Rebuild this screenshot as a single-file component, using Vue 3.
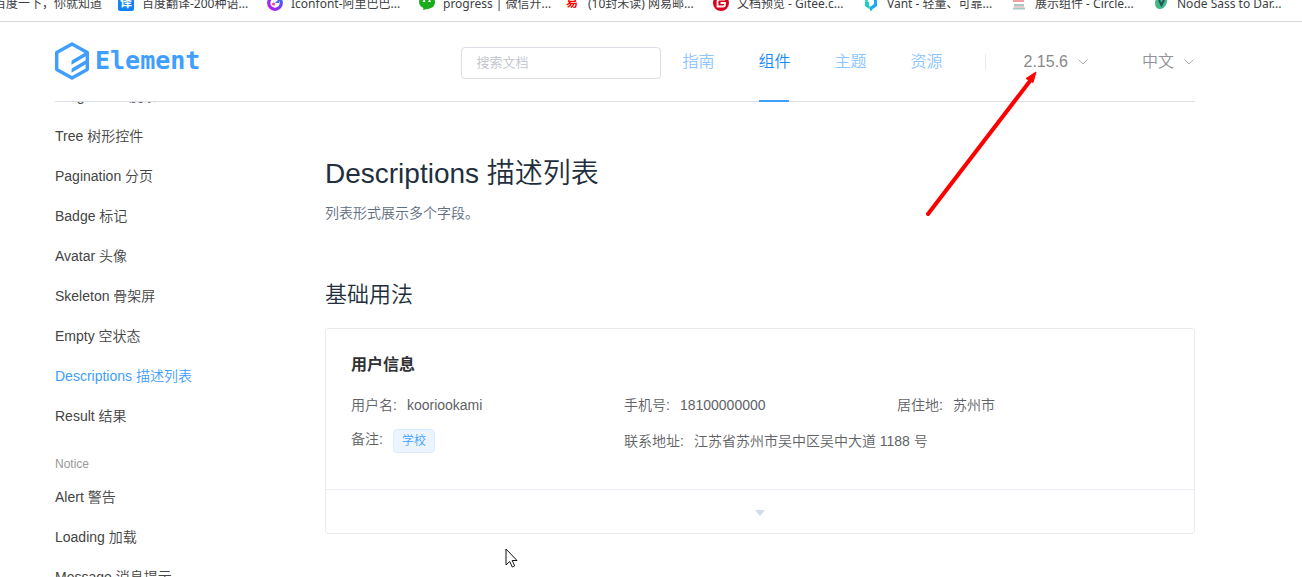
<script setup>
import { ref } from 'vue'

const keyword = ref('')
const bookmarks = [
  { icon: 'none', text: '百度一下，你就知道' },
  { icon: 'translate', text: '百度翻译-200种语...' },
  { icon: 'iconfont', text: 'Iconfont-阿里巴巴...' },
  { icon: 'wechat', text: 'progress | 微信开...' },
  { icon: 'netease', text: '(10封未读) 网易邮...' },
  { icon: 'gitee', text: '文档预览 - Gitee.c...' },
  { icon: 'vant', text: 'Vant - 轻量、可靠...' },
  { icon: 'circle', text: '展示组件 - Circle...' },
  { icon: 'sass', text: 'Node Sass to Dar...' },
]
const nav = ['指南', '组件', '主题', '资源']
const dataItems = [
  'Progress 进度条',
  'Tree 树形控件',
  'Pagination 分页',
  'Badge 标记',
  'Avatar 头像',
  'Skeleton 骨架屏',
  'Empty 空状态',
  'Descriptions 描述列表',
  'Result 结果',
]
const noticeItems = ['Alert 警告', 'Loading 加载', 'Message 消息提示']
const activeItem = 'Descriptions 描述列表'
</script>

<template>
  <div class="page">
    <nav class="bookmarks" aria-label="书签栏">
      <a v-for="b in bookmarks" :key="b.text" href="#" class="bookmark">
        <span v-if="b.icon === 'translate'" class="fav fav-translate">译</span>
        <svg v-else-if="b.icon === 'iconfont'" class="fav" viewBox="0 0 16 16">
          <defs>
            <linearGradient id="ring" x1="1" y1="0" x2="0" y2="1">
              <stop offset="0" stop-color="#3a6cf5" />
              <stop offset="0.5" stop-color="#7a3cf5" />
              <stop offset="1" stop-color="#c214f2" />
            </linearGradient>
          </defs>
          <circle cx="8" cy="8" r="6.3" fill="#fff" stroke="url(#ring)" stroke-width="3.2" />
          <path d="M8 8l4-4v4z" fill="#3a6cf5" />
          <circle cx="6.6" cy="9" r="1.6" fill="#f0489a" />
        </svg>
        <svg v-else-if="b.icon === 'wechat'" class="fav" viewBox="0 0 16 16">
          <path d="M0 7a8 7 0 0 1 16 0c0 5-5 7-8 7l-4 1 .5-2C2 12 0 10 0 7z" fill="#1aad19" />
          <path d="M3.500 7l1.600-3 1.400 3zM9 7l1.600-3 1.400 3z" fill="#fff" />
        </svg>
        <span v-else-if="b.icon === 'netease'" class="fav fav-netease">易</span>
        <svg v-else-if="b.icon === 'gitee'" class="fav" viewBox="0 0 16 16">
          <circle cx="8" cy="8" r="8" fill="#d9001b" />
          <path d="M12 4.5H6.5a2 2 0 0 0-2 2v5h5.5a2 2 0 0 0 2-2V8H7.5" fill="none" stroke="#fff" stroke-width="1.8" />
        </svg>
        <svg v-else-if="b.icon === 'vant'" class="fav" viewBox="0 0 16 16">
          <path d="M2 0h6v3H5v7l4 3v3l-7-5z" fill="#39e0b5" />
          <path d="M8 0h6v11l-7 5v-4l4-3V3H8z" fill="#1ba9f5" />
          <path d="M2 7h4v6L2 11z" fill="#1bd0c0" />
        </svg>
        <svg v-else-if="b.icon === 'circle'" class="fav" viewBox="0 0 16 16">
          <path d="M2 6h11" stroke="#f0a0a0" stroke-width="2" />
          <path d="M3 10h10M2 13.5h12" stroke="#a9c7c4" stroke-width="2" />
          <path d="M3 11.8h10" stroke="#e8b3b0" stroke-width="1" />
        </svg>
        <svg v-else-if="b.icon === 'sass'" class="fav" viewBox="0 0 16 16">
          <path d="M3 4c3-3 8-4 11-2 1 6-2 12-7 12-5 0-6-6-4-10z" fill="#42b883" />
          <path d="M6 5l2.400 5L11 5" fill="none" stroke="#24505c" stroke-width="2" />
        </svg>
        <span>{{ b.text }}</span>
      </a>
    </nav>

    <div class="container">
      <header class="header">
        <a class="logo" href="#">
          <svg class="logo-mark" viewBox="0 0 34 38" aria-hidden="true">
            <path
              d="M17 2L32.300 10.600V27.400L17 36L1.700 27.400V10.600z"
              fill="none"
              stroke="#409eff"
              stroke-width="3.400"
              stroke-linejoin="round"
            />
            <path
              d="M17.500 18L32 9.500V13.500L16.500 22.700V19.700Q16.500 18.600 17.500 18zM17.500 26L32 17.500V21.500L16.500 30.700V27.700Q16.500 26.600 17.500 26z"
              fill="#409eff"
            />
          </svg>
          <span>Element</span>
        </a>
        <div class="header-right">
          <input v-model="keyword" class="search" type="text" placeholder="搜索文档" aria-label="搜索文档" />
          <nav class="menu" aria-label="主导航">
            <a v-for="n in nav" :key="n" href="#" :class="{ active: n === '组件' }">{{ n }}</a>
          </nav>
          <span class="split"></span>
          <button type="button" class="drop version">
            2.15.6
            <svg viewBox="0 0 10 6"><path d="M0.500 0.500L5 5l4.500-4.500" /></svg>
          </button>
          <button type="button" class="drop">
            中文
            <svg viewBox="0 0 10 6"><path d="M0.500 0.500L5 5l4.500-4.500" /></svg>
          </button>
        </div>
      </header>

      <div class="body">
        <aside class="sidebar">
          <ul>
            <li v-for="i in dataItems" :key="i">
              <a href="#" :class="{ active: i === activeItem }">{{ i }}</a>
            </li>
          </ul>
          <div class="group">Notice</div>
          <ul>
            <li v-for="i in noticeItems" :key="i"><a href="#">{{ i }}</a></li>
          </ul>
        </aside>

        <main class="content">
          <h2>Descriptions 描述列表</h2>
          <p>列表形式展示多个字段。</p>
          <h3>基础用法</h3>
          <section class="demo">
            <div class="source">
              <h4>用户信息</h4>
              <dl>
                <div><dt>用户名:</dt><dd>kooriookami</dd></div>
                <div><dt>手机号:</dt><dd>18100000000</dd></div>
                <div><dt>居住地:</dt><dd>苏州市</dd></div>
                <div><dt>备注:</dt><dd><span class="tag">学校</span></dd></div>
                <div class="wide"><dt>联系地址:</dt><dd>江苏省苏州市吴中区吴中大道 1188 号</dd></div>
              </dl>
            </div>
            <button type="button" class="control" aria-label="显示代码">
              <span class="caret"></span>
            </button>
          </section>
        </main>
      </div>
    </div>

    <svg class="arrow" viewBox="0 0 120 150" aria-hidden="true">
      <path d="M8 144L110 11" stroke="#f00" stroke-width="4" stroke-linecap="round" />
      <path d="M116 2l-10 6.500 3 1.500 4 2.500z" fill="#f00" stroke="#f00" stroke-width="1" />
    </svg>
    <svg class="cursor" viewBox="0 0 13 20" aria-hidden="true">
      <path d="M1 1v16l3.700-3.500 2.600 5.500 2.400-1.200L7.200 12.500h4.800z" fill="#fff" stroke="#111" />
    </svg>
  </div>
</template>

<style>
body {
  background: #fff;
}
</style>

<style scoped>
* {
  box-sizing: border-box;
}
.page {
  position: relative;
  height: 100vh;
  overflow: hidden;
  font-family: "Liberation Sans", "Noto Sans CJK SC", sans-serif;
  font-size: 14px;
  font-weight: 350;
  color: #606266;
}
a {
  color: inherit;
  text-decoration: none;
}
ul,
dl,
dd {
  margin: 0;
  padding: 0;
  list-style: none;
}
.bookmarks {
  display: grid;
  grid-template-columns: 124px 149px 152px 145px 149px 150px 148px 142px 1fr;
  align-content: end;
  height: 22px;
  padding-bottom: 5px;
  margin-left: -6px;
  border-bottom: 1px solid #d9dadc;
  overflow: hidden;
  font-family: "Noto Sans", "Noto Sans CJK SC", sans-serif;
  font-size: 12px;
  font-weight: 400;
  color: #3c4043;
}
.bookmark {
  display: flex;
  align-items: center;
  gap: 8px;
  height: 24px;
  line-height: 24px;
  white-space: nowrap;
}
.fav {
  flex: none;
  width: 16px;
  height: 16px;
  margin-bottom: 2px;
  line-height: 16px;
  text-align: center;
}
.fav-translate {
  border-radius: 2px;
  background: #1183f5;
  color: #fff;
  font-weight: 700;
}
.fav-netease {
  color: #f00;
  font-weight: 700;
}
.container {
  padding: 0 107px 0 55px;
}
.header {
  display: flex;
  justify-content: space-between;
  height: 80px;
  border-bottom: 1px solid #dcdfe6;
}
.logo {
  display: flex;
  align-items: center;
  gap: 6px;
  height: 78px;
  color: #409eff;
  font: 700 25px/38px "DejaVu Sans Mono", monospace;
}
.logo-mark {
  width: 34px;
  height: 38px;
}
.header-right {
  display: flex;
  align-items: center;
  padding-right: 1px;
}
.search {
  width: 200px;
  height: 32px;
  margin-top: 2px;
  padding: 0 14px;
  border: 1px solid #dcdfe6;
  border-radius: 4px;
  outline: none;
  font-family: inherit;
  font-size: 13px;
  font-weight: inherit;
}
.search::placeholder {
  color: #c0c4cc;
}
.menu {
  display: flex;
  align-self: stretch;
  gap: 44px;
  padding: 0 42px 0 21px;
  font-size: 16px;
  line-height: 80px;
}
.menu a {
  height: 80px;
  color: #8cc5ff;
}
.menu .active {
  position: relative;
  color: #1989fa;
}
.menu .active::after {
  content: "";
  position: absolute;
  left: 1px;
  right: 1px;
  bottom: 0;
  height: 2px;
  background: #409eff;
}
.split {
  width: 1px;
  height: 16px;
  margin-right: 38px;
  background: #ebebeb;
}
.drop {
  display: flex;
  align-items: center;
  gap: 10px;
  padding: 0;
  border: 0;
  background: none;
  color: #909399;
  font-family: inherit;
  font-size: 16px;
  font-weight: inherit;
  line-height: 24px;
}
.version {
  margin-right: 54px;
  color: #888;
}
.drop svg {
  width: 10px;
  height: 6px;
  fill: none;
  stroke: #a8abb2;
}
.body {
  display: flex;
}
.sidebar {
  flex: none;
  width: 270px;
  height: calc(100vh - 102px);
  overflow: hidden;
  color: #444;
  line-height: 40px;
}
.sidebar ul:first-child {
  margin-top: -26px;
}
.sidebar .active {
  color: #409eff;
}
.group {
  margin-top: 15px;
  font-size: 12px;
  line-height: 26px;
  color: #999;
}
.content {
  flex: 1;
  padding-top: 52px;
}
h2,
h3,
h4,
p {
  margin: 0;
}
h2 {
  font-size: 28px;
  font-weight: 350;
  line-height: 40px;
  color: #1f2f3d;
}
p {
  margin-top: 9px;
  line-height: 20px;
  color: #5e6d82;
}
h3 {
  margin-top: 57px;
  font-size: 22px;
  font-weight: 350;
  line-height: 30px;
  color: #1f2f3d;
}
.demo {
  margin-top: 18px;
  border: 1px solid #ebebeb;
  border-radius: 3px;
}
.source {
  padding: 25px 24px 36px 25px;
}
h4 {
  font-size: 16px;
  font-weight: 700;
  line-height: 22px;
  color: #303133;
}
dl {
  display: grid;
  grid-template-columns: repeat(3, 1fr);
  align-items: center;
  row-gap: 14px;
  margin-top: 19px;
  line-height: 20px;
}
dl > div {
  display: flex;
  gap: 10px;
}
.wide {
  grid-column: span 2;
}
.tag {
  display: block;
  height: 24px;
  padding: 0 8px;
  border: 1px solid #d9ecff;
  border-radius: 4px;
  background: #ecf5ff;
  color: #409eff;
  font-size: 12px;
  line-height: 22px;
}
.control {
  display: flex;
  align-items: center;
  justify-content: center;
  width: 100%;
  height: 44px;
  padding: 2px 0 0;
  border: 0;
  border-top: 1px solid #eaeefb;
  background: none;
}
.caret {
  border: 5px solid transparent;
  border-top: 6px solid #d3dce6;
  border-bottom: 0;
}
.arrow {
  position: absolute;
  left: 920px;
  top: 70px;
  width: 120px;
  height: 150px;
  fill: none;
}
.cursor {
  position: absolute;
  left: 505px;
  top: 548px;
  width: 13px;
  height: 20px;
}
</style>
